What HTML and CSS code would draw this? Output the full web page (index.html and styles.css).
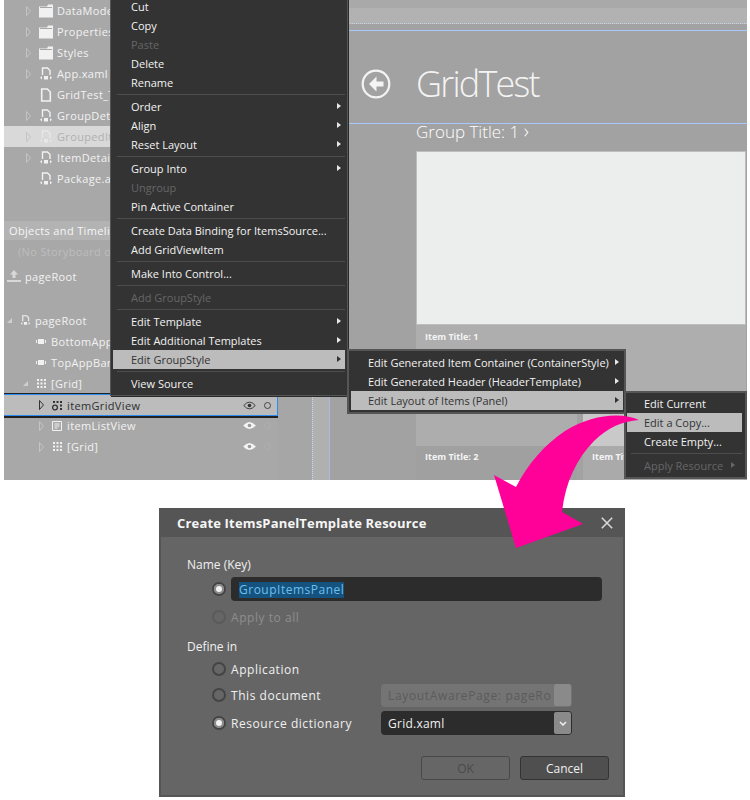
FILE: index.html
```html
<!DOCTYPE html>
<html lang="en">
<head>
<meta charset="utf-8">
<title>Create ItemsPanelTemplate Resource</title>
<link rel="stylesheet" href="styles.css">
</head>
<body>
<svg class="defs" width="0" height="0" aria-hidden="true">
  <symbol id="folder" viewBox="0 0 14 13"><path d="M0 2h8l1-2h5v13H0z" fill="#f1f1f1"/><path d="M1 3h12" stroke="#a6a6a6" fill="none"/></symbol>
  <symbol id="xaml" viewBox="0 0 14 14"><path d="M3.500 8V1h5l2.500 2.500V8" fill="none" stroke="#f1f1f1" stroke-width="1.400"/><path d="M3 10l-2 1.700L3 13.400M11 10l2 1.700-2 1.700M5 10h4v3.500H5z" fill="#f1f1f1" transform="translate(0 -1)"/></symbol>
  <symbol id="file" viewBox="0 0 12 14"><path d="M1.700 1h5.600l3 3v9H1.700z" fill="none" stroke="#f1f1f1" stroke-width="1.600"/></symbol>
  <symbol id="grid" viewBox="0 0 9 9"><path d="M0 0h2v2H0zM3.500 0h2v2h-2zM7 0h2v2H7zM0 3.500h2v2H0zM3.500 3.500h2v2h-2zM7 3.500h2v2H7zM0 7h2v2H0zM3.500 7h2v2h-2zM7 7h2v2H7z" fill="currentColor"/></symbol>
  <symbol id="bar" viewBox="0 0 10 5"><path d="M0 1h1v3H0zM2 0h6v5H2zM9 1h1v3H9z" fill="#f1f1f1"/></symbol>
  <symbol id="eye" viewBox="0 0 14 10"><path d="M0 5q7-8 14 0q-7 8-14 0z" fill="#f4f4f4"/><circle cx="7" cy="5" r="2" fill="#9a9a9a"/></symbol>
  <symbol id="open-right" viewBox="0 0 5 10"><path d="M.5.500v9l4-4.500z" fill="none" stroke="currentColor"/></symbol>
</svg>

<main class="shot">
  <section class="tree-panel">
    <ul class="tree">
      <li class="row l1"><svg class="twist"><use href="#open-right"/></svg><svg class="ico"><use href="#folder"/></svg>DataModel</li>
      <li class="row l1"><svg class="twist"><use href="#open-right"/></svg><svg class="ico"><use href="#folder"/></svg>Properties</li>
      <li class="row l1"><svg class="twist"><use href="#open-right"/></svg><svg class="ico"><use href="#folder"/></svg>Styles</li>
      <li class="row l1"><svg class="twist"><use href="#open-right"/></svg><svg class="ico"><use href="#xaml"/></svg>App.xaml</li>
      <li class="row l1"><span class="twist"></span><svg class="ico"><use href="#file"/></svg>GridTest_T</li>
      <li class="row l1"><svg class="twist"><use href="#open-right"/></svg><svg class="ico"><use href="#xaml"/></svg>GroupDeta</li>
      <li class="row l1 active"><svg class="twist"><use href="#open-right"/></svg><svg class="ico"><use href="#xaml"/></svg>GroupedIt</li>
      <li class="row l1"><svg class="twist"><use href="#open-right"/></svg><svg class="ico"><use href="#xaml"/></svg>ItemDetail</li>
      <li class="row l1"><span class="twist"></span><svg class="ico"><use href="#xaml"/></svg>Package.ap</li>
    </ul>
    <h2 class="objects-head">Objects and Timeline</h2>
    <p class="storyboard">(No Storyboard open)</p>
    <p class="scope"><svg class="up" viewBox="0 0 14 12"><path d="M7 0l4 4.500H8.500V8h-3V4.500H3zM0 10h14v2H0z" fill="#d8d8d8"/></svg>pageRoot</p>
    <ul class="objects">
      <li class="row o0"><span class="down"></span><svg class="ico-s"><use href="#xaml"/></svg>pageRoot</li>
      <li class="row o1"><svg class="bar"><use href="#bar"/></svg>BottomAppBar</li>
      <li class="row o1"><svg class="bar"><use href="#bar"/></svg>TopAppBar</li>
      <li class="row o2"><span class="down"></span><svg class="g"><use href="#grid"/></svg>[Grid]</li>
      <li class="row o3 selected">
        <svg class="twist dark"><use href="#open-right"/></svg>
        <svg class="gv" viewBox="0 0 11 11"><circle cx="3" cy="7.500" r="2.400" fill="none" stroke="#333" stroke-width="1.300"/><path d="M1 1h2v2H1zM4.500 1h2v2h-2zM8 1h2v2H8zM8 4.500h2v2H8zM8 8h2v2H8z" fill="#333"/></svg>
        <span class="name">itemGridView</span>
        <svg class="eye-open" viewBox="0 0 14 10"><path d="M.6 5q6.400-7.500 12.800 0q-6.400 7.500-12.800 0z" fill="none" stroke="#333"/><circle cx="7" cy="5" r="2" fill="#333"/></svg>
        <span class="lock dark-lock"></span>
      </li>
      <li class="row o3">
        <svg class="twist"><use href="#open-right"/></svg>
        <svg class="g list" viewBox="0 0 10 10"><path d="M.5.500h9v9h-9zM2.500 3h5M2.500 5h5M2.500 7h3" fill="none" stroke="#f1f1f1"/></svg>
        <span class="name">itemListView</span>
        <svg class="eye"><use href="#eye"/></svg><span class="lock"></span>
      </li>
      <li class="row o3">
        <svg class="twist"><use href="#open-right"/></svg>
        <svg class="g"><use href="#grid"/></svg>
        <span class="name">[Grid]</span>
        <svg class="eye"><use href="#eye"/></svg><span class="lock"></span>
      </li>
    </ul>
  </section>

  <div class="gutter"><span class="col-a"></span><span class="col-b"></span><span class="col-c"></span></div>

  <section class="designer">
    <div class="ruler-a"></div>
    <div class="ruler-b"></div>
    <div class="page-head">
      <svg class="back" viewBox="0 0 30 30"><circle cx="15" cy="15" r="13.300" fill="none" stroke="#f4f4f4" stroke-width="2.200"/><path d="M15.500 7.500L8 15l7.500 7.500 0-5h7v-5h-7z" fill="#f4f4f4"/></svg>
      <h1 class="page-title">GridTest</h1>
    </div>
    <div class="group-wrap">
      <h3 class="group-title">Group Title: 1 <span class="chev">&#8250;</span></h3>
      <article class="card-one">
        <div class="card-image"></div>
        <p class="item-title">Item Title: 1</p>
      </article>
      <div class="cards-two">
        <article class="card-two">
          <div class="card-image-2"></div>
          <p class="item-title">Item Title: 2</p>
        </article>
        <article class="card-three">
          <div class="card-image-3"></div>
          <p class="item-title">Item Title: 3</p>
        </article>
      </div>
    </div>
  </section>

  <nav class="menu main-menu">
    <div class="mi">Cut</div>
    <div class="mi">Copy</div>
    <div class="mi off">Paste</div>
    <div class="mi">Delete</div>
    <div class="mi">Rename</div>
    <hr class="sep">
    <div class="mi more">Order</div>
    <div class="mi more">Align</div>
    <div class="mi more">Reset Layout</div>
    <hr class="sep">
    <div class="mi more">Group Into</div>
    <div class="mi off">Ungroup</div>
    <div class="mi">Pin Active Container</div>
    <hr class="sep">
    <div class="mi">Create Data Binding for ItemsSource...</div>
    <div class="mi">Add GridViewItem</div>
    <hr class="sep">
    <div class="mi">Make Into Control...</div>
    <hr class="sep">
    <div class="mi off">Add GroupStyle</div>
    <hr class="sep">
    <div class="mi more">Edit Template</div>
    <div class="mi more">Edit Additional Templates</div>
    <div class="mi more hot">Edit GroupStyle</div>
    <hr class="sep">
    <div class="mi">View Source</div>
  </nav>

  <nav class="menu sub-menu">
    <div class="mi more">Edit Generated Item Container (ContainerStyle)</div>
    <div class="mi more">Edit Generated Header (HeaderTemplate)</div>
    <div class="mi more hot">Edit Layout of Items (Panel)</div>
  </nav>

  <nav class="menu sub-sub-menu">
    <div class="mi">Edit Current</div>
    <div class="mi hot">Edit a Copy...</div>
    <div class="mi">Create Empty...</div>
    <hr class="sep">
    <div class="mi off more">Apply Resource</div>
  </nav>
</main>

<section class="dialog">
  <header class="dlg-head">
    <h2 class="dlg-title">Create ItemsPanelTemplate Resource</h2>
    <svg class="close" viewBox="0 0 12 12"><path d="M.8.800l10.400 10.400M11.200.800L.8 11.200" stroke="#dcdcdc" stroke-width="1.500" fill="none"/></svg>
  </header>
  <div class="dlg-body">
    <p class="label">Name (Key)</p>
    <div class="opt opt-name">
      <span class="radio on"></span>
      <div class="input"><span class="selection">GroupItemsPanel</span></div>
    </div>
    <div class="opt opt-apply">
      <span class="radio off-radio"></span><span class="opt-text disabled">Apply to all</span>
    </div>
    <p class="label label-define">Define in</p>
    <div class="opt opt-app">
      <span class="radio"></span><span class="opt-text">Application</span>
    </div>
    <div class="opt opt-doc">
      <span class="radio"></span><span class="opt-text">This document</span>
      <div class="combo combo-off"><span class="combo-text">LayoutAwarePage: pageRo</span><span class="combo-btn"></span></div>
    </div>
    <div class="opt opt-res">
      <span class="radio on"></span><span class="opt-text">Resource dictionary</span>
      <div class="combo"><span class="combo-text">Grid.xaml</span><span class="combo-btn"><svg class="caret" viewBox="0 0 8 5"><path d="M1 1l3 3 3-3" fill="none" stroke="#f1f1f1" stroke-width="1.500"/></svg></span></div>
    </div>
    <div class="actions">
      <button class="btn btn-off" type="button">OK</button>
      <button class="btn" type="button">Cancel</button>
    </div>
  </div>
</section>

<svg class="arrow" viewBox="0 0 750 800" aria-hidden="true">
  <path d="M639 420C622 412 592 414 565 431C544 445 528 464 516 487L494 475L516 548L583 524L562 512C565 484 576 459 594 441C607 428 622 421 639 420Z" fill="#ff0099"/>
</svg>
</body>
</html>
```

FILE: styles.css
```css
* { box-sizing: border-box; }
html, body { margin: 0; padding: 0; background: #fff; }
body { position: relative; width: 750px; height: 800px; overflow: hidden; font-family: "Open Sans", "Noto Sans", sans-serif; font-size: 11px; }
h1, h2, h3, p, ul { margin: 0; padding: 0; font-weight: 400; list-style: none; }
.defs { position: absolute; }

/* Upper screenshot */
.shot { position: relative; width: 743px; height: 480px; margin-left: 4px; overflow: hidden; background: #a2a2a2; }

.tree-panel { position: absolute; left: 0; top: 0; width: 274px; height: 480px; background: #a8a8a8; color: #f2f2f2; letter-spacing: .35px; }
.tree { height: 218px; }
.row { display: flex; align-items: center; height: 21px; white-space: nowrap; position: relative; }
.l1 { padding-left: 22px; }
.twist { width: 5px; height: 10px; color: #c4c4c4; flex: none; }
.ico { width: 14px; height: 14px; margin-left: 8px; margin-right: 4px; flex: none; }
.active { background: #d9d9d9; color: #b0b0b0; }
.active .ico { opacity: .6; }
.objects-head { height: 19px; margin-top: 3px; padding-left: 5px; background: #b3b3b3; color: #f6f6f6; font-size: 11px; line-height: 19px; white-space: nowrap; }
.storyboard { height: 24px; padding-left: 14px; line-height: 24px; color: #bdbdbd; white-space: nowrap; }
.scope { display: flex; align-items: center; height: 28px; margin-top: -2px; padding-left: 3px; font-size: 11px; }
.up { width: 14px; height: 12px; margin-right: 4px; }
.objects { padding-top: 20px; }
.down { width: 0; height: 0; border-style: solid; border-width: 0 0 5px 5px; border-color: transparent transparent #cfcfcf transparent; flex: none; }
.ico-s { width: 11px; height: 11px; margin-right: 4px; flex: none; }
.o0 { padding-left: 3px; }
.o0 .down { margin-right: 8px; }
.o1 { padding-left: 32px; }
.bar { width: 10px; height: 5px; margin-right: 5px; }
.o2 { padding-left: 19px; }
.o2 .down { margin-right: 9px; }
.g { width: 9px; height: 9px; margin-right: 5px; color: #f1f1f1; flex: none; }
.o3 { padding-left: 35px; }
.o3 .g { margin-left: 9px; }
.gv { width: 11px; height: 11px; margin-left: 8px; margin-right: 4px; flex: none; }
.g.list { width: 10px; height: 10px; margin-left: 8px; margin-right: 5px; }
.name { flex: 1; }
.selected { height: 22px; background: #bcbcbc; color: #2f2f2f; border-top: 1px solid #2a8cf0; border-bottom: 1px solid #2a8cf0; border-right: 1px solid #2a8cf0; box-shadow: 0 -1px 0 #222, 0 2px 0 #222; }
.selected + .row { margin-top: -1px; }
.twist.dark { color: #333; }
.eye, .eye-open { width: 13px; height: 9px; margin-right: 8px; flex: none; }
.lock { width: 7px; height: 7px; margin-right: 7px; border: 1px solid #b0b0b0; border-radius: 50%; flex: none; }
.dark-lock { border-color: #444; margin-right: 6px; }

.gutter { position: absolute; left: 274px; top: 0; width: 72px; height: 480px; display: flex; background: #a0a0a0; }
.col-a { width: 34px; background: #a6a6a6; }
.col-b { width: 17px; background: #b0b0b0; border-left: 1px dotted #c9d8ee; }
.col-c { width: 21px; border-left: 1px solid #a5bce0; background: #a2a2a2; }

.designer { position: absolute; left: 342px; top: 0; right: 0; height: 480px; background: #a2a2a2; color: #f8f8f8; }
.ruler-a { height: 8px; background: #a9a9a9; }
.ruler-b { height: 16px; background: #b2b2b2; border-bottom: 1px dotted #c8d4e6; }
.page-head { display: flex; align-items: center; height: 94px; border-top: 1px solid #a9c8ff; margin-top: 6px; border-bottom: 1px solid #a9c8ff; padding-left: 15px; padding-top: 14px; }
.back { width: 30px; height: 30px; flex: none; }
.page-title { margin-left: 25px; font-size: 36px; font-weight: 300; line-height: 40px; letter-spacing: -1.8px; color: #f4f4f4; }
.group-wrap { padding-left: 70px; margin-top: -4px; }
.group-title { height: 31px; font-size: 17px; font-weight: 300; line-height: 24px; white-space: nowrap; color: #fff; }
.chev { font-size: 20px; line-height: 20px; }
.card-one { height: 240px; background: #aeaeae; margin-right: 1px; }
.card-image { height: 174px; background: #eceeed; border: 1px solid #bdbdbd; }
.item-title { padding: 5px 0 0 9px; font-size: 9px; font-weight: 700; color: #f4f4f4; white-space: nowrap; }
.cards-two .item-title { padding-top: 4px; }
.cards-two { display: flex; gap: 6px; }
.card-two, .card-three { flex: none; height: 90px; }
.card-two { width: 161px; background: #a0a0a0; }
.card-three { width: 160px; background: #aaaaaa; }
.card-image-2 { height: 55px; background: #adadad; }
.card-image-3 { height: 55px; background: #c9c9c9; }

.menu { position: absolute; background: #333; color: #f2f2f2; border: 1px solid #555; white-space: nowrap; }
.main-menu { left: 106px; top: -4px; width: 238px; padding: 1px 2px 2px; border-top: 0; box-shadow: 1px 1px 0 #2a2a2a; }
.mi { position: relative; height: 19px; line-height: 19px; padding-left: 18px; }
.off { color: #666; }
.more::after { content: ""; position: absolute; right: 4px; top: 6px; border-style: solid; border-width: 3.500px 0 3.500px 4px; border-color: transparent transparent transparent #e8e8e8; }
.off.more::after { border-left-color: #666; }
.hot { background: #bcbcbc; color: #333; }
.hot.more::after { border-left-color: #333; }
.sep { height: 1px; margin: 2px 0 2px 4px; border: 0; background: #4d4d4d; }
.sub-menu { left: 343px; top: 349px; width: 279px; padding: 2px 1px 2px 2px; border-width: 2px; }
.sub-menu .mi { padding-left: 17px; }
.sub-sub-menu { left: 620px; top: 391px; width: 123px; height: 88px; padding: 1px 3px 0 1px; border-width: 2px; }
.sub-sub-menu .mi { padding-left: 17px; }
.sub-sub-menu .off.more::after { right: 7px; }

/* Dialog */
.dialog { position: absolute; left: 159px; top: 508px; width: 466px; height: 289px; background: #656565; border: 2px solid #555; border-top: 0; color: #f0f0f0; font-size: 12px; }
.dlg-head { display: flex; align-items: center; justify-content: space-between; height: 29px; margin: 0 -2px; padding: 0 12px 0 18px; background: #555; }
.dlg-title { font-size: 13px; font-weight: 700; letter-spacing: .17px; color: #f6f6f6; white-space: nowrap; }
.close { width: 12px; height: 12px; flex: none; }
.dlg-body { padding: 19px 14px 0 26px; }
.label { height: 18px; line-height: 18px; }
.opt { display: flex; align-items: center; padding-left: 25px; }
.radio { width: 14px; height: 14px; flex: none; margin-right: 5px; border-radius: 50%; border: 2px solid #444; background: #666; }
.radio.on { background: #f2f2f2; box-shadow: inset 0 0 0 2px #8a8a8a; }
.off-radio { border-color: #5a5a5a; }
.opt-name { height: 24px; margin-top: 3px; }
.input { width: 371px; height: 24px; margin-left: 0; padding-left: 8px; background: #2c2c2c; border-radius: 4px; line-height: 25px; letter-spacing: .5px; }
.selection { display: inline-block; height: 16px; line-height: 16px; background: #15527e; color: #6cc0f0; }
.opt-apply { height: 20px; margin-top: 6px; }
.disabled { color: #8d8d8d; }
.label-define { margin-top: 11px; }
.opt-app { height: 20px; margin-top: 3px; }
.opt-doc { height: 24px; margin-top: 4px; }
.opt-res { height: 24px; margin-top: 4px; }
.opt-text { width: 150px; flex: none; white-space: nowrap; letter-spacing: .55px; }
.combo { display: flex; align-items: center; justify-content: space-between; width: 191px; height: 24px; padding: 0 1px 0 7px; background: #2c2c2c; border-radius: 4px; }
.combo-off { background: #747474; height: 23px; color: #5b5b5b; }
.combo-off .combo-text { letter-spacing: .65px; }
.combo-text { white-space: nowrap; overflow: hidden; letter-spacing: .25px; }
.combo-btn { display: flex; align-items: center; justify-content: center; width: 17px; height: 22px; flex: none; background: #8a8a8a; border-radius: 2px; }
.caret { width: 8px; height: 5px; }
.actions { display: flex; justify-content: flex-end; gap: 10px; margin-top: 21px; }
.btn { width: 89px; height: 24px; padding: 0; font: inherit; color: #f0f0f0; background: #4f4f4f; border: 1px solid #333; border-radius: 3px; }
.btn-off { background: #666; border-color: #484848; color: #4a4a4a; }

.arrow { position: absolute; left: 0; top: 0; width: 750px; height: 800px; pointer-events: none; }
```
